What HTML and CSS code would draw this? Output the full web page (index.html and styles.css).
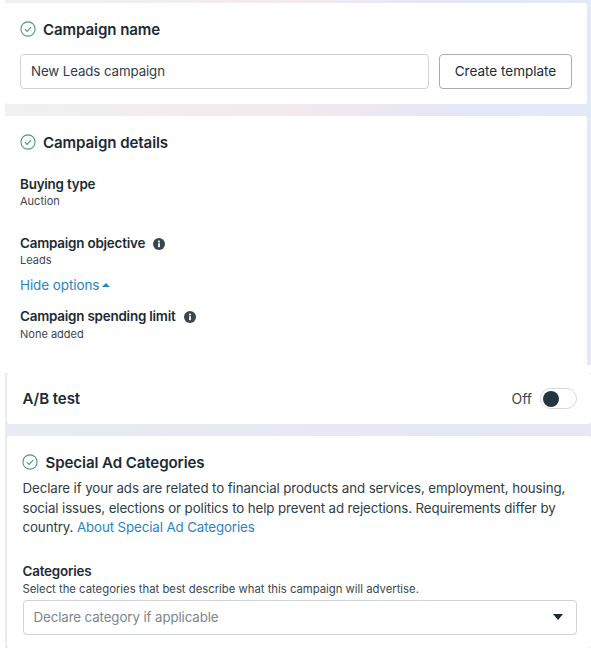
FILE: index.html
```html
<!DOCTYPE html>
<html lang="en">
<head>
<meta charset="UTF-8">
<title>Campaign</title>
<link rel="stylesheet" href="styles.css">
</head>
<body>

<div class="group group-top">
  <section class="panel panel-name">
    <h2 class="panel-title">
      <svg class="check" viewBox="0 0 16 16"><circle cx="8" cy="8" r="7.1"/><path d="M4.9 8.2l2.2 2.2 4-4.2"/></svg>
      Campaign name
    </h2>
    <div class="name-row">
      <div class="field name-field">New Leads campaign</div>
      <button class="btn">Create template</button>
    </div>
  </section>

  <section class="panel panel-details">
    <h2 class="panel-title">
      <svg class="check" viewBox="0 0 16 16"><circle cx="8" cy="8" r="7.1"/><path d="M4.9 8.2l2.2 2.2 4-4.2"/></svg>
      Campaign details
    </h2>
    <div class="info info-buying">
      <div class="info-label">Buying type</div>
      <div class="info-value">Auction</div>
    </div>
    <div class="info info-objective">
      <div class="info-label">Campaign objective
        <svg class="tip" viewBox="0 0 12 12"><circle cx="6" cy="6" r="6"/><rect x="5.1" y="5.2" width="1.8" height="4" fill="#fff"/><rect x="5.1" y="2.6" width="1.8" height="1.8" fill="#fff"/></svg>
      </div>
      <div class="info-value">Leads</div>
    </div>
    <a class="toggle-link">Hide options <span class="caret-up"></span></a>
    <div class="info info-limit">
      <div class="info-label">Campaign spending limit
        <svg class="tip" viewBox="0 0 12 12"><circle cx="6" cy="6" r="6"/><rect x="5.1" y="5.2" width="1.8" height="4" fill="#fff"/><rect x="5.1" y="2.6" width="1.8" height="1.8" fill="#fff"/></svg>
      </div>
      <div class="info-value">None added</div>
    </div>
  </section>
</div>

<div class="group group-bottom">
  <section class="panel panel-ab">
    <h2 class="panel-title">A/B test</h2>
    <div class="switch-wrap">
      <span>Off</span>
      <span class="switch"><span class="knob"></span></span>
    </div>
  </section>

  <section class="panel panel-special">
    <h2 class="panel-title">
      <svg class="check" viewBox="0 0 16 16"><circle cx="8" cy="8" r="7.1"/><path d="M4.9 8.2l2.2 2.2 4-4.2"/></svg>
      Special Ad Categories
    </h2>
    <p class="desc">Declare if your ads are related to financial products and services, employment, housing, social issues, elections or politics to help prevent ad rejections. Requirements differ by country. <a>About Special Ad Categories</a></p>
    <div class="info-label">Categories</div>
    <div class="info-value hint">Select the categories that best describe what this campaign will advertise.</div>
    <div class="field select-field">
      <span>Declare category if applicable</span>
      <span class="caret-down"></span>
    </div>
  </section>
</div>

</body>
</html>
```

FILE: styles.css
```css
* {
  box-sizing: border-box;
}
html, body {
  margin: 0;
  background: #fff;
  font-family: Inter, "Noto Sans", sans-serif;
  color: #1c2b33;
}
body {
  width: 591px;
  height: 648px;
  overflow: hidden;
}
.group {
  display: flex;
  flex-direction: column;
  gap: 12px;
}
.group-top {
  margin-left: 5px;
  height: 365px;
  padding: 3px 4px 0 0;
  background: linear-gradient(90deg, #f0f1f3 0%, #f3e9ee 50%, #e6e6f6 75%, #e4e9f8 100%);
}
.group-bottom {
  margin: 8px 0 0 5px;
  height: 275px;
  padding-left: 2px;
  background: linear-gradient(90deg, #e9ebf2 0%, #e6e6f5 100%);
}
.panel {
  background: #fff;
  border-radius: 3px;
}
.panel-name {
  height: 101px;
  padding: 14px 15px 0 15px;
}
.panel-details {
  flex: 1;
  padding: 14px 15px 0 15px;
  border-radius: 3px 3px 0 0;
}
.panel-ab {
  height: 51px;
  padding: 0 14px 0 15.5px;
  display: flex;
  align-items: center;
  justify-content: space-between;
}
.panel-special {
  flex: 1;
  padding: 14px 14px 0 15.5px;
}
.panel-title {
  margin: 0;
  height: 24px;
  display: flex;
  align-items: center;
  gap: 7.5px;
  font-size: 15.1px;
  font-weight: 600;
  letter-spacing: -0.1px;
}
.check {
  width: 16px;
  height: 16px;
  margin-left: -0.5px;
  fill: none;
  stroke: #4a9a7e;
  stroke-width: 1.1;
}
.name-row {
  display: flex;
  gap: 10px;
  margin-top: 13px;
}
.field {
  height: 35px;
  border: 1px solid #cfd2d6;
  border-radius: 4px;
  background: #fff;
  font-size: 13.3px;
  padding: 0 10px;
  display: flex;
  align-items: center;
}
.name-field {
  width: 409px;
  padding-bottom: 1px;
  letter-spacing: -0.1px;
  color: #2f3d45;
}
.btn {
  width: 133px;
  height: 35px;
  border: 1px solid #a9adb1;
  border-radius: 4px;
  background: #fff;
  color: #1c2b33;
  font-family: inherit;
  font-size: 13.5px;
  font-weight: 400;
  padding: 0 0 1px;
}
.info-label {
  font-size: 13.4px;
  line-height: 17px;
  font-weight: 600;
  letter-spacing: -0.2px;
  display: flex;
  align-items: center;
  gap: 8px;
}
.info-value {
  font-size: 11px;
  line-height: 15px;
  margin-top: 1px;
  color: #3a474f;
}
.info-buying {
  margin-top: 22px;
}
.info-objective {
  margin-top: 26px;
}
.tip {
  width: 12px;
  height: 12px;
  fill: #39454d;
}
.toggle-link {
  display: flex;
  align-items: center;
  gap: 3px;
  margin-top: 8px;
  font-size: 13.5px;
  line-height: 18px;
  color: #2a85bd;
  letter-spacing: -0.1px;
}
.caret-up {
  width: 0;
  height: 0;
  border-left: 4px solid transparent;
  border-right: 4px solid transparent;
  border-bottom: 4px solid #2a85bd;
}
.info-limit {
  margin-top: 14px;
}
.info-limit .info-value {
  margin-top: 2px;
}
.switch-wrap {
  display: flex;
  align-items: center;
  gap: 8px;
  font-size: 14px;
  color: #3a474f;
}
.switch {
  width: 37px;
  height: 21px;
  padding: 2px;
  border: 1px solid #d5d8db;
  border-radius: 11px;
  display: block;
}
.knob {
  display: block;
  width: 16px;
  height: 16px;
  border-radius: 50%;
  background: #24353f;
}
.desc {
  margin: 5px 0 0;
  font-size: 13.3px;
  line-height: 19.5px;
  color: #2f3d45;
  letter-spacing: -0.1px;
}
.desc a {
  color: #2a85bd;
}
.panel-special .info-label {
  margin-top: 25px;
}
.hint {
  font-size: 11.3px;
  margin-top: 2px;
}
.select-field {
  margin-top: 3px;
  justify-content: space-between;
  color: #7d868c;
  padding-right: 13px;
  letter-spacing: -0.1px;
}
.caret-down {
  width: 0;
  height: 0;
  border-left: 5px solid transparent;
  border-right: 5px solid transparent;
  border-top: 6px solid #1c2b33;
}
```
